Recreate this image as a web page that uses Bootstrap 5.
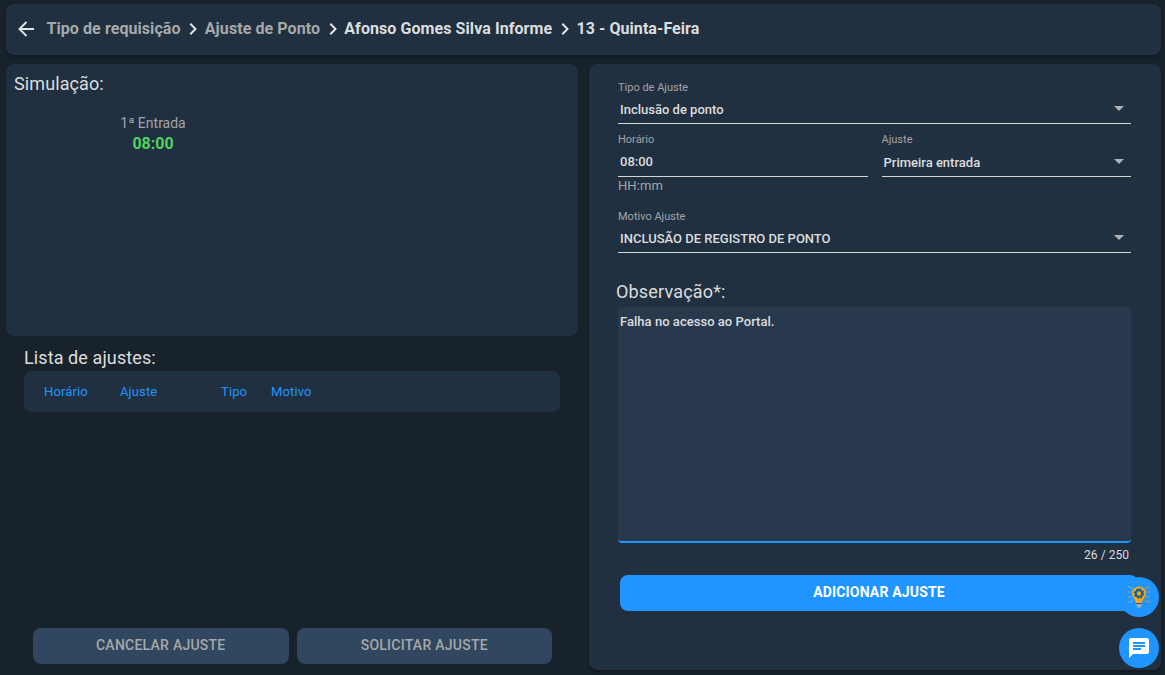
<!DOCTYPE html>
<html lang="pt-BR">
<head>
<meta charset="utf-8">
<meta name="viewport" content="width=device-width, initial-scale=1">
<title>Ajuste de Ponto</title>
<link href="https://cdn.jsdelivr.net/npm/bootstrap@5.3.0/dist/css/bootstrap.min.css" rel="stylesheet">
<style>
body{font-family:Roboto,sans-serif;background:#18222b;color:#dcdddf;height:675px;overflow:hidden;font-size:13px}
.app{height:675px;padding:4px 4px 5px 6px}
.panel{background:#213040;border-radius:8px;box-shadow:0 2px 3px rgba(0,0,0,.28)}
.topbar{height:51px;padding:0 12px 2px;margin-bottom:9px;font-size:16px;font-weight:700;letter-spacing:.075px}
.topbar a{color:#a6a8a9;text-decoration:none}
.topbar .back{width:17px;height:16px;margin-right:11.5px}
.topbar .chev{width:8px;height:12px;margin:1px 7.800px 0 8.400px}
.columns{display:grid;grid-template-columns:repeat(2,minmax(0,1fr));gap:11px}
.heading{font-size:18px;font-weight:400;line-height:24px;margin:0;letter-spacing:.1px}
.simulation{height:272px;padding:8px;box-shadow:none}
.punch{width:278px;margin-top:17px;color:#a2a5a8;font-size:14px;line-height:20px}
.punch strong{display:block;color:#4ed45f;font-size:16px;font-weight:700;line-height:22px}
.adjustments{padding:10px 18px 0}
.list-head{height:41px;margin-top:1px;padding-left:20px;color:#2094ff;box-shadow:none;letter-spacing:.12px}
.btn-app{height:36px;border:0;border-radius:8px;font-size:14px;font-weight:500;line-height:34px;padding:0 0 2px;letter-spacing:.25px}
.btn-muted,.btn-muted:disabled{background:#31475f;color:#a6a8a9;opacity:1}
.btn-add{background:#2094ff;color:#fff;font-weight:700;letter-spacing:.17px;width:518px;margin:10px 0 0 2px}
.btn-add:hover{background:#1588f2;color:#fff}
.actions{gap:8px;padding:0 26px 6px 27px}
.form-side{padding:15px 30px 0 29px}
.field label{display:block;font-size:11px;line-height:16px;padding-top:1px;height:16px;color:#a2a5a8;font-weight:400}
.field .value{height:29px;border-bottom:1px solid #d3d5d7;padding:5px 7px 0 2px;font-weight:500;line-height:20px}
.field .caret{width:10px;height:5px;margin-top:6px;fill:#b0b2b3}
.two-fields{gap:14px;margin-top:7px}
.two-fields .value{height:30px}
.two-fields .select-value{padding-top:6px}
.hint{line-height:18px;color:#a2a5a8;height:31px;letter-spacing:.1px}
.obs{margin:27px 0 3px -2px;letter-spacing:.17px}
.note{background:#28394e;color:#dcdddf;border:0;border-bottom:2px solid #2094ff;border-radius:4px;height:236px;padding:5px 2px;font-size:13px;font-weight:500;line-height:20px;letter-spacing:.03px;resize:none;width:100%;display:block;outline:0}
.counter{line-height:20px;padding:2px 2px 0 0;height:22px;font-size:12px;letter-spacing:.04px}
.floating{position:absolute;right:6px;bottom:7px;gap:11px}
.floating button{width:40px;height:40px;border-radius:50%;background:#2094ff;border:0;padding:0}
</style>
</head>
<body>
<div class="app d-flex flex-column position-relative">
  <header class="panel topbar d-flex align-items-center">
    <svg class="back" viewBox="0 0 17 16" fill="none" stroke="#e3e4e5" stroke-width="1.900"><path d="M16 8H2M8.500 1 1.500 8l7 7"/></svg>
    <a href="#">Tipo de requisição</a>
    <svg class="chev" viewBox="0 0 8 12" fill="none" stroke="#e3e4e5" stroke-width="2"><path d="m1.300 .8 5.200 5.200-5.200 5.200"/></svg>
    <a href="#">Ajuste de Ponto</a>
    <svg class="chev" viewBox="0 0 8 12" fill="none" stroke="#e3e4e5" stroke-width="2"><path d="m1.300 .8 5.200 5.200-5.200 5.200"/></svg>
    <span>Afonso Gomes Silva Informe</span>
    <svg class="chev" viewBox="0 0 8 12" fill="none" stroke="#e3e4e5" stroke-width="2"><path d="m1.300 .8 5.200 5.200-5.200 5.200"/></svg>
    <span>13 - Quinta-Feira</span>
  </header>
  <main class="columns flex-grow-1">
    <section class="d-flex flex-column">
      <div class="panel simulation">
        <h2 class="heading">Simulação:</h2>
        <div class="punch text-center"><div>1ª Entrada</div><strong>08:00</strong></div>
      </div>
      <div class="adjustments">
        <h2 class="heading">Lista de ajustes:</h2>
        <div class="panel list-head d-flex align-items-center">
          <span style="width:76px">Horário</span><span style="width:101px">Ajuste</span><span style="width:50px">Tipo</span><span>Motivo</span>
        </div>
      </div>
      <div class="actions d-flex mt-auto">
        <button class="btn btn-app btn-muted w-50" disabled>CANCELAR AJUSTE</button>
        <button class="btn btn-app btn-muted w-50" disabled>SOLICITAR AJUSTE</button>
      </div>
    </section>
    <section class="panel form-side">
      <div class="field">
        <label>Tipo de Ajuste</label>
        <div class="value d-flex justify-content-between"><span>Inclusão de ponto</span><svg class="caret" viewBox="0 0 10 5"><path d="M0 0h10L5 5z"/></svg></div>
      </div>
      <div class="two-fields d-flex">
        <div class="field w-50">
          <label>Horário</label>
          <div class="value">08:00</div>
        </div>
        <div class="field w-50">
          <label>Ajuste</label>
          <div class="value select-value d-flex justify-content-between"><span>Primeira entrada</span><svg class="caret" viewBox="0 0 10 5"><path d="M0 0h10L5 5z"/></svg></div>
        </div>
      </div>
      <div class="hint">HH:mm</div>
      <div class="field">
        <label>Motivo Ajuste</label>
        <div class="value d-flex justify-content-between"><span>INCLUSÃO DE REGISTRO DE PONTO</span><svg class="caret" viewBox="0 0 10 5"><path d="M0 0h10L5 5z"/></svg></div>
      </div>
      <h2 class="heading obs">Observação*:</h2>
      <textarea class="note" spellcheck="false">Falha no acesso ao Portal.</textarea>
      <div class="counter text-end">26 / 250</div>
      <button class="btn btn-app btn-add">ADICIONAR AJUSTE</button>
    </section>
  </main>
  <div class="floating d-flex flex-column">
    <button class="d-flex align-items-center justify-content-center" aria-label="Dicas">
      <svg width="24" height="24" viewBox="0 0 24 24"><path d="M1 2h3l2 3M1 7h4M1 12h4M1 17h3l2-3M23 2h-3l-2 3M23 7h-4M23 12h-4M23 17h-3l-2-3" fill="none" stroke="#b9a565" stroke-width="1.200" stroke-dasharray="2 1"/><path d="M12 1.500a7 7 0 0 0-7 7c0 3.600 3.500 5.500 4 9.500h6c.5-4 4-5.900 4-9.500a7 7 0 0 0-7-7z" fill="#f9a41c"/><circle cx="12" cy="8.500" r="3.300" fill="none" stroke="#12608c" stroke-width="2.200"/><circle cx="12" cy="8.500" r="4.700" fill="none" stroke="#12608c" stroke-width="1.200" stroke-dasharray="1.850 1.840"/><path d="M9.500 18h5v3l-1.500 2h-2l-1.500-2z" fill="#8faab8"/><path d="M9 18.500h6" stroke="#28617f"/></svg>
    </button>
    <button class="d-flex align-items-center justify-content-center" aria-label="Chat">
      <svg width="24" height="24" viewBox="0 0 24 24" fill="#fff"><path d="M20 2H4c-1.100 0-2 .9-2 2v18l4-4h14c1.100 0 2-.9 2-2V4c0-1.100-.9-2-2-2zM6 9h12v2H6V9zm8 5H6v-2h8v2zm4-6H6V6h12v2z"/></svg>
    </button>
  </div>
</div>
<script src="https://cdn.jsdelivr.net/npm/bootstrap@5.3.0/dist/js/bootstrap.bundle.min.js"></script>
</body>
</html>
